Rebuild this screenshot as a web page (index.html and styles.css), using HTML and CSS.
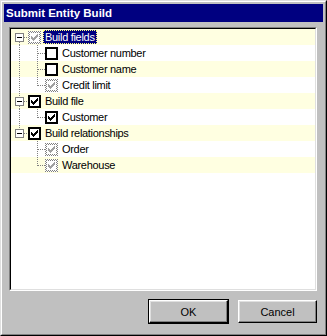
FILE: index.html
```html
<!DOCTYPE html>
<html>
<head>
<meta charset="utf-8">
<link rel="stylesheet" href="styles.css">
</head>
<body>
<svg class="defs" width="0" height="0">
  <defs>
    <pattern id="dots" width="2" height="2" patternUnits="userSpaceOnUse">
      <rect x="0" y="0" width="1" height="1" fill="#808080"/>
      <rect x="1" y="1" width="1" height="1" fill="#808080"/>
    </pattern>
  </defs>
</svg>
<div class="window">
  <div class="frame">
    <div class="titlebar">Submit Entity Build</div>
    <div class="tree-outer">
      <div class="tree-inner">
        <!-- Build fields -->
        <div class="row yellow">
          <svg class="g0" width="17" height="16">
            <line x1="8.5" y1="13" x2="8.5" y2="16" class="dl"/>
            <line x1="13" y1="8.5" x2="17" y2="8.5" class="dl"/>
            <rect x="4.5" y="4.5" width="8" height="8" fill="#fff" stroke="#808080"/>
            <line x1="6" y1="8.5" x2="11" y2="8.5" stroke="#000"/>
          </svg>
          <svg class="cb" width="13" height="13">
            <rect width="13" height="13" fill="#fff"/>
            <path d="M0 0h13v13h-13z M2 2v9h9v-9z" fill="url(#dots)" fill-rule="evenodd"/>
            <path class="chk-g" d="M9 3h1v1h-1z M8 4h2v1h-2z M3 5h1v1h-1z M7 5h3v1h-3z M3 6h2v1h-2z M6 6h3v1h-3z M3 7h5v1h-5z M4 8h3v1h-3z M5 9h1v1h-1z"/>
          </svg>
          <span class="label selected">Build fields</span>
        </div>
        <!-- Customer number -->
        <div class="row">
          <svg class="g1" width="34" height="16">
            <line x1="8.5" y1="0" x2="8.5" y2="16" class="dl"/>
            <line x1="26.5" y1="0" x2="26.5" y2="16" class="dl"/>
            <line x1="27" y1="8.5" x2="34" y2="8.5" class="dl"/>
          </svg>
          <svg class="cb" width="13" height="13">
            <rect x="1" y="1" width="11" height="11" fill="#fff" stroke="#000" stroke-width="2"/>
          </svg>
          <span class="label">Customer number</span>
        </div>
        <!-- Customer name -->
        <div class="row yellow">
          <svg class="g1" width="34" height="16">
            <line x1="8.5" y1="0" x2="8.5" y2="16" class="dl"/>
            <line x1="26.5" y1="0" x2="26.5" y2="16" class="dl"/>
            <line x1="27" y1="8.5" x2="34" y2="8.5" class="dl"/>
          </svg>
          <svg class="cb" width="13" height="13">
            <rect x="1" y="1" width="11" height="11" fill="#fff" stroke="#000" stroke-width="2"/>
          </svg>
          <span class="label">Customer name</span>
        </div>
        <!-- Credit limit -->
        <div class="row">
          <svg class="g1" width="34" height="16">
            <line x1="8.5" y1="0" x2="8.5" y2="16" class="dl"/>
            <line x1="26.5" y1="0" x2="26.5" y2="9" class="dl"/>
            <line x1="27" y1="8.5" x2="34" y2="8.5" class="dl"/>
          </svg>
          <svg class="cb" width="13" height="13">
            <rect width="13" height="13" fill="#fff"/>
            <path d="M0 0h13v13h-13z M2 2v9h9v-9z" fill="url(#dots)" fill-rule="evenodd"/>
            <path class="chk-g" d="M9 3h1v1h-1z M8 4h2v1h-2z M3 5h1v1h-1z M7 5h3v1h-3z M3 6h2v1h-2z M6 6h3v1h-3z M3 7h5v1h-5z M4 8h3v1h-3z M5 9h1v1h-1z"/>
          </svg>
          <span class="label">Credit limit</span>
        </div>
        <!-- Build file -->
        <div class="row yellow">
          <svg class="g0" width="17" height="16">
            <line x1="8.5" y1="0" x2="8.5" y2="4" class="dl"/>
            <line x1="8.5" y1="13" x2="8.5" y2="16" class="dl"/>
            <line x1="13" y1="8.5" x2="17" y2="8.5" class="dl"/>
            <rect x="4.5" y="4.5" width="8" height="8" fill="#fff" stroke="#808080"/>
            <line x1="6" y1="8.5" x2="11" y2="8.5" stroke="#000"/>
          </svg>
          <svg class="cb" width="13" height="13">
            <rect x="1" y="1" width="11" height="11" fill="#fff" stroke="#000" stroke-width="2"/>
            <path class="chk" d="M9 3h1v1h-1z M8 4h2v1h-2z M3 5h1v1h-1z M7 5h3v1h-3z M3 6h2v1h-2z M6 6h3v1h-3z M3 7h5v1h-5z M4 8h3v1h-3z M5 9h1v1h-1z"/>
          </svg>
          <span class="label">Build file</span>
        </div>
        <!-- Customer -->
        <div class="row">
          <svg class="g1" width="34" height="16">
            <line x1="8.5" y1="0" x2="8.5" y2="16" class="dl"/>
            <line x1="26.5" y1="0" x2="26.5" y2="9" class="dl"/>
            <line x1="27" y1="8.5" x2="34" y2="8.5" class="dl"/>
          </svg>
          <svg class="cb" width="13" height="13">
            <rect x="1" y="1" width="11" height="11" fill="#fff" stroke="#000" stroke-width="2"/>
            <path class="chk" d="M9 3h1v1h-1z M8 4h2v1h-2z M3 5h1v1h-1z M7 5h3v1h-3z M3 6h2v1h-2z M6 6h3v1h-3z M3 7h5v1h-5z M4 8h3v1h-3z M5 9h1v1h-1z"/>
          </svg>
          <span class="label">Customer</span>
        </div>
        <!-- Build relationships -->
        <div class="row yellow">
          <svg class="g0" width="17" height="16">
            <line x1="8.5" y1="0" x2="8.5" y2="4" class="dl"/>
            <line x1="13" y1="8.5" x2="17" y2="8.5" class="dl"/>
            <rect x="4.5" y="4.5" width="8" height="8" fill="#fff" stroke="#808080"/>
            <line x1="6" y1="8.5" x2="11" y2="8.5" stroke="#000"/>
          </svg>
          <svg class="cb" width="13" height="13">
            <rect x="1" y="1" width="11" height="11" fill="#fff" stroke="#000" stroke-width="2"/>
            <path class="chk" d="M9 3h1v1h-1z M8 4h2v1h-2z M3 5h1v1h-1z M7 5h3v1h-3z M3 6h2v1h-2z M6 6h3v1h-3z M3 7h5v1h-5z M4 8h3v1h-3z M5 9h1v1h-1z"/>
          </svg>
          <span class="label">Build relationships</span>
        </div>
        <!-- Order -->
        <div class="row">
          <svg class="g1" width="34" height="16">
            <line x1="26.5" y1="0" x2="26.5" y2="16" class="dl"/>
            <line x1="27" y1="8.5" x2="34" y2="8.5" class="dl"/>
          </svg>
          <svg class="cb" width="13" height="13">
            <rect width="13" height="13" fill="#fff"/>
            <path d="M0 0h13v13h-13z M2 2v9h9v-9z" fill="url(#dots)" fill-rule="evenodd"/>
            <path class="chk-g" d="M9 3h1v1h-1z M8 4h2v1h-2z M3 5h1v1h-1z M7 5h3v1h-3z M3 6h2v1h-2z M6 6h3v1h-3z M3 7h5v1h-5z M4 8h3v1h-3z M5 9h1v1h-1z"/>
          </svg>
          <span class="label">Order</span>
        </div>
        <!-- Warehouse -->
        <div class="row yellow">
          <svg class="g1" width="34" height="16">
            <line x1="26.5" y1="0" x2="26.5" y2="9" class="dl"/>
            <line x1="27" y1="8.5" x2="34" y2="8.5" class="dl"/>
          </svg>
          <svg class="cb" width="13" height="13">
            <rect width="13" height="13" fill="#fff"/>
            <path d="M0 0h13v13h-13z M2 2v9h9v-9z" fill="url(#dots)" fill-rule="evenodd"/>
            <path class="chk-g" d="M9 3h1v1h-1z M8 4h2v1h-2z M3 5h1v1h-1z M7 5h3v1h-3z M3 6h2v1h-2z M6 6h3v1h-3z M3 7h5v1h-5z M4 8h3v1h-3z M5 9h1v1h-1z"/>
          </svg>
          <span class="label">Warehouse</span>
        </div>
      </div>
    </div>
    <div class="buttons">
      <div class="default-frame"><div class="btn">OK</div></div>
      <div class="btn cancel">Cancel</div>
    </div>
  </div>
</div>
</body>
</html>
```
FILE: styles.css
```css
html, body {
  margin: 0;
  padding: 0;
  background: #c0c0c0;
}
body {
  font-family: "Liberation Sans", Arial, sans-serif;
  font-size: 11px;
  color: #000;
}
.defs {
  position: absolute;
  width: 0;
  height: 0;
}
.window {
  width: 327px;
  height: 336px;
  box-sizing: border-box;
  border: 1px solid;
  border-color: #dfdfdf #000 #000 #dfdfdf;
  background: #c0c0c0;
}
.frame {
  height: 100%;
  box-sizing: border-box;
  border: 1px solid;
  border-color: #fff #808080 #808080 #fff;
  padding: 2px;
  display: flex;
  flex-direction: column;
}
.titlebar {
  height: 18px;
  line-height: 18px;
  background: #000080;
  color: #fff;
  font-weight: bold;
  font-size: 11.5px;
  padding-left: 2px;
}
.tree-outer {
  margin: 5px 6px 0 5px;
  height: 264px;
  box-sizing: border-box;
  border: 1px solid;
  border-color: #808080 #fff #fff #808080;
}
.tree-inner {
  height: 100%;
  box-sizing: border-box;
  border: 1px solid;
  border-color: #000 #dfdfdf #dfdfdf #000;
  background: #fff;
}
.row {
  height: 16px;
  display: flex;
  align-items: flex-start;
  background: #fff;
}
.row.yellow {
  background: #ffffe1;
}
.g0, .g1 {
  display: block;
  flex: none;
}
.dl {
  stroke: #808080;
  stroke-width: 1;
  stroke-dasharray: 1 1;
  shape-rendering: crispEdges;
}
.cb {
  display: block;
  flex: none;
  margin-top: 2px;
  shape-rendering: crispEdges;
}
.chk {
  fill: #000;
}
.chk-g {
  fill: #a0a0a0;
}
.label {
  margin-top: 1px;
  margin-left: 2px;
  height: 14px;
  box-sizing: border-box;
  border: 1px solid transparent;
  padding: 0 1px;
  line-height: 12px;
  letter-spacing: -0.3px;
  white-space: nowrap;
}
.label.selected {
  background: #000080;
  color: #fff;
  border: 1px dotted #ffff80;
}
.buttons {
  margin-top: 8px;
  display: flex;
  justify-content: flex-end;
  align-items: flex-start;
  gap: 9px;
  padding-right: 6px;
}
.default-frame {
  border: 1px solid #000;
}
.btn {
  width: 79px;
  height: 23px;
  box-sizing: border-box;
  border: 1px solid;
  border-color: #fff #000 #000 #fff;
  box-shadow: inset -1px -1px #808080, inset 1px 1px #dfdfdf;
  background: #c0c0c0;
  display: flex;
  align-items: center;
  justify-content: center;
  font-size: 11px;
}
.btn.cancel {
  margin-top: 1px;
}
```
